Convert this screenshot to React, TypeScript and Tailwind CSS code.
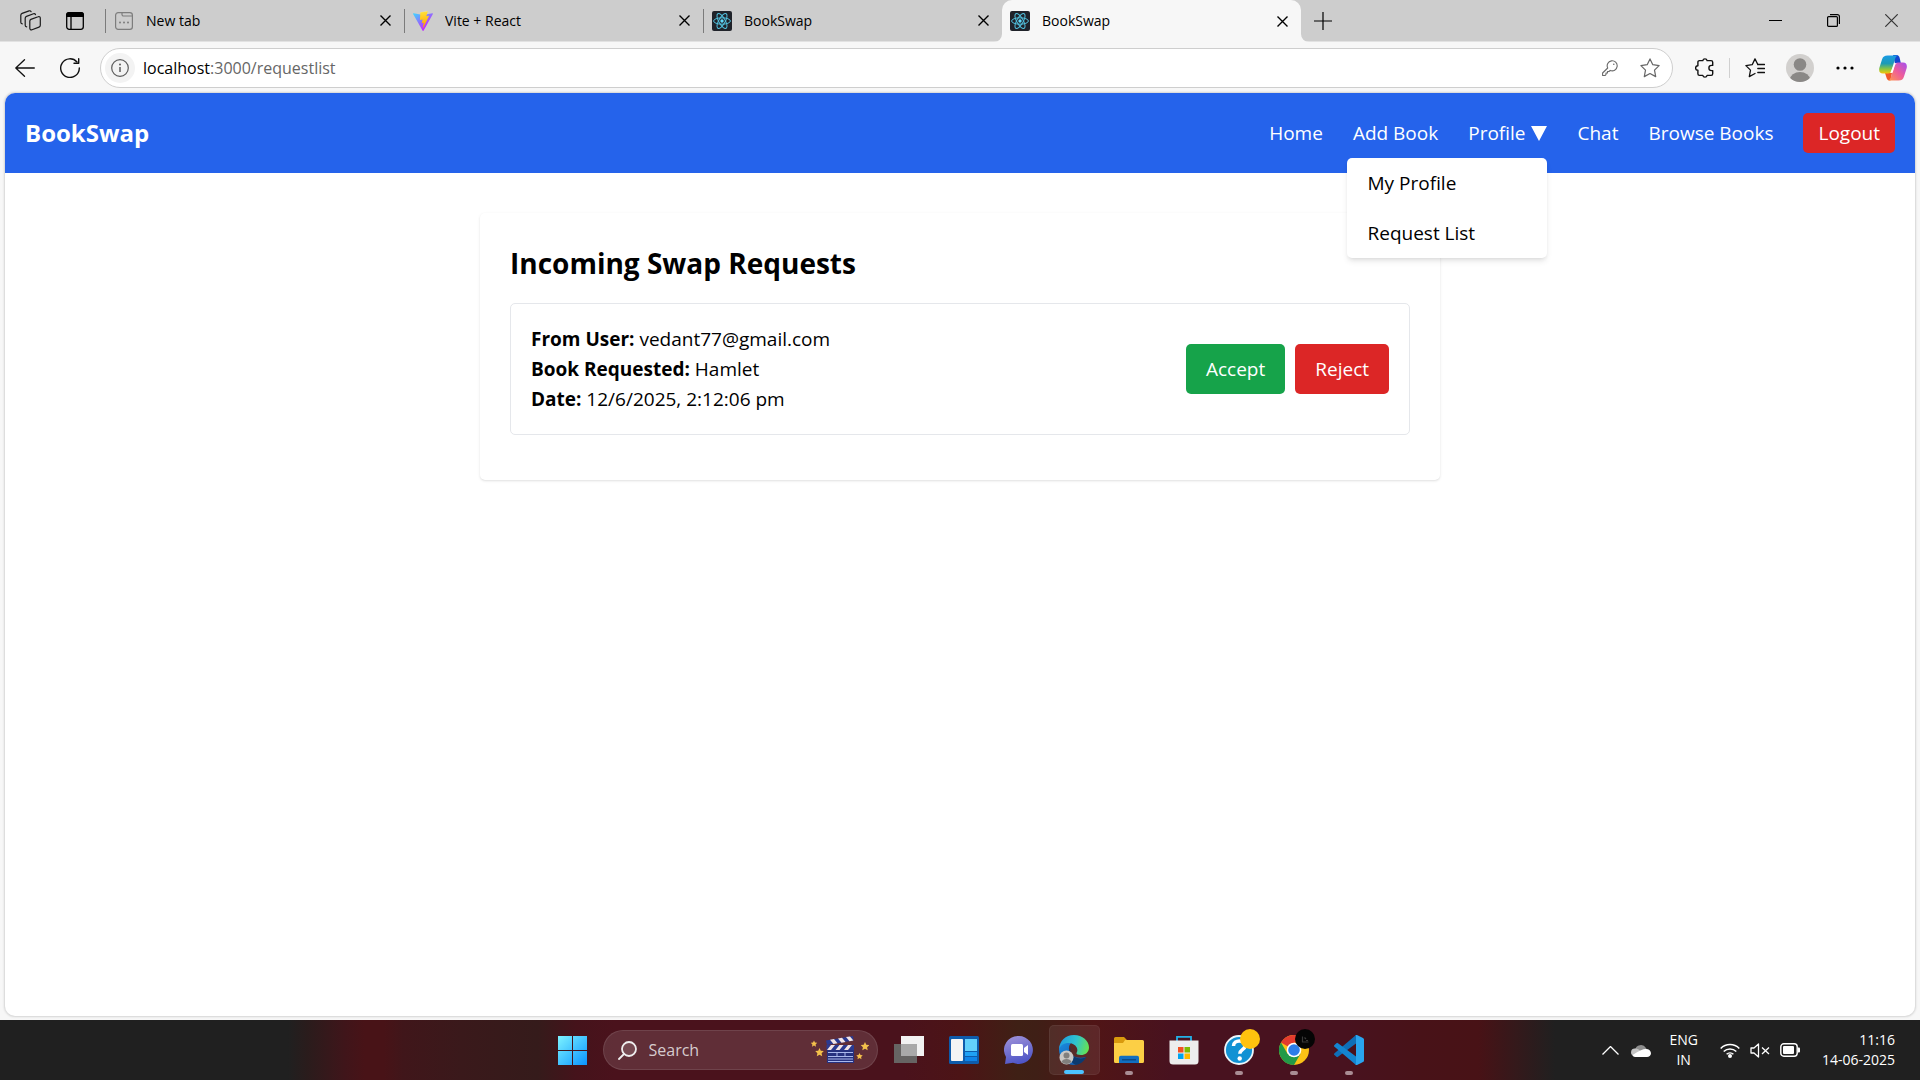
import React, { ReactNode } from "react";

type IconProps = { className?: string };

const ReactLogo = () => (
  <svg viewBox="0 0 20 20" className="size-5 shrink-0" aria-hidden="true">
    <rect width="20" height="20" rx="2" fill="#20232a" />
    <g fill="none" stroke="#52c1de" strokeWidth="1">
      <ellipse cx="10" cy="10" rx="8.4" ry="3.2" />
      <ellipse cx="10" cy="10" rx="8.4" ry="3.2" transform="rotate(60 10 10)" />
      <ellipse cx="10" cy="10" rx="8.4" ry="3.2" transform="rotate(120 10 10)" />
    </g>
    <circle cx="10" cy="10" r="1.7" fill="#61dafb" />
  </svg>
);

const ViteLogo = () => (
  <svg viewBox="0 0 256 257" className="size-5 shrink-0" aria-hidden="true">
    <defs>
      <linearGradient id="viteA" x1="-.8%" x2="57.6%" y1="7.7%" y2="78.4%">
        <stop offset="0" stopColor="#41d1ff" />
        <stop offset="1" stopColor="#bd34fe" />
      </linearGradient>
      <linearGradient id="viteB" x1="43.4%" x2="50.3%" y1="2.2%" y2="89%">
        <stop offset="0" stopColor="#ffea83" />
        <stop offset=".08" stopColor="#ffdd35" />
        <stop offset="1" stopColor="#ffa800" />
      </linearGradient>
    </defs>
    <path fill="url(#viteA)" d="M255.153 37.938L134.897 252.976c-2.483 4.44-8.862 4.466-11.382.048L.875 37.958c-2.746-4.814 1.371-10.646 6.827-9.67l120.385 21.517a6.537 6.537 0 0 0 2.322-.004l117.867-21.483c5.438-.991 9.574 4.796 6.877 9.62Z" />
    <path fill="url(#viteB)" d="M185.432.063L96.44 17.501a3.268 3.268 0 0 0-2.634 3.014l-5.474 92.456a3.268 3.268 0 0 0 3.997 3.378l24.777-5.718c2.318-.535 4.413 1.507 3.936 3.838l-7.361 36.047c-.495 2.426 1.782 4.5 4.151 3.78l15.304-4.649c2.372-.72 4.652 1.36 4.15 3.788l-11.698 56.621c-.732 3.542 3.979 5.473 5.943 2.437l1.313-2.028l72.516-144.72c1.215-2.423-.88-5.186-3.54-4.672l-25.505 4.922c-2.396.462-4.435-1.77-3.759-4.114l16.646-57.705c.677-2.35-1.37-4.583-3.769-4.113Z" />
  </svg>
);

const NewTabIcon = () => (
  <svg viewBox="0 0 18 18" className="mx-px size-[18px] shrink-0" fill="none" stroke="#7d7d7d" strokeWidth="1.2" aria-hidden="true">
    <rect x=".6" y=".6" width="16.8" height="16.8" rx="2.6" />
    <path d="M7 .6v1.9A1.5 1.5 0 0 0 8.500 4H17.400" />
    <g fill="#7d7d7d" stroke="none">
      <circle cx="5" cy="10.500" r="1" />
      <circle cx="9" cy="10.500" r="1" />
      <circle cx="13" cy="10.500" r="1" />
    </g>
  </svg>
);

const Cross = ({ className = "size-[11px]" }: IconProps) => (
  <svg viewBox="0 0 11 11" className={className} stroke="currentColor" strokeWidth="1.4" aria-hidden="true">
    <path d="M.5.5l10 10M10.500.5l-10 10" />
  </svg>
);

const Workspaces = () => (
  <svg viewBox="0 0 21 21" className="size-[21px]" fill="none" stroke="#1b1b1b" strokeWidth="1.2" strokeLinejoin="round" strokeLinecap="round" aria-hidden="true">
    <path d="M10.900 9.400l7.200-2.700a1.600 1.600 0 0 1 2.200 1.500v7a2 2 0 0 1-1.300 1.900l-7 2.700a1.600 1.600 0 0 1-2.200-1.500v-7a2 2 0 0 1 1.100-1.900z" />
    <path d="M6.700 16.800A1.600 1.600 0 0 1 5.200 15.200V8.300A2 2 0 0 1 6.500 6.400l7-2.600a1.600 1.600 0 0 1 2 .8" />
    <path d="M2.300 13.800A1.600 1.600 0 0 1 .8 12.200V5.300A2 2 0 0 1 2.100 3.400l7-2.500a1.600 1.600 0 0 1 2 .8" />
  </svg>
);

const TabActions = () => (
  <svg viewBox="0 0 18 18" className="size-[18px]" aria-hidden="true">
    <rect x=".7" y=".7" width="16.600" height="16.600" rx="2.500" fill="none" stroke="#000" strokeWidth="1.300" />
    <path d="M0 5V3a3 3 0 0 1 3-3h12a3 3 0 0 1 3 3v2z" />
    <path d="M5 5v12.500" stroke="#000" strokeWidth="1.300" />
  </svg>
);

const tabs = [
  { title: "New tab", icon: <NewTabIcon /> },
  { title: "Vite + React", icon: <ViteLogo /> },
  { title: "BookSwap", icon: <ReactLogo /> },
];

function TabStrip() {
  return (
    <div className="flex h-[42px] border-b border-[#e2e2e2] bg-[#cdcdcd] text-black">
      <div className="flex w-[105px] shrink-0 items-center gap-[25px] pl-5">
        <button aria-label="Workspaces"><Workspaces /></button>
        <button aria-label="Tab actions"><TabActions /></button>
      </div>
      {tabs.map((t) => (
        <div key={t.title} className="flex w-[299px] min-w-0 items-center">
          <span className="h-6 w-px bg-[#7b7b7b]" />
          <div className="flex min-w-0 flex-1 items-center pr-[13px] pl-2">
            {t.icon}
            <span className="ml-3 flex-1 truncate text-sm">{t.title}</span>
            <button aria-label={`Close ${t.title}`}><Cross /></button>
          </div>
        </div>
      ))}
      <div className="relative flex h-[42px] w-[299px] min-w-0 items-center rounded-t-[10px] bg-[#f7f7f7] pr-[13px] pl-2">
        <svg viewBox="0 0 8 8" className="absolute bottom-0 -left-2 size-2" aria-hidden="true"><path d="M8 0v8H0a8 8 0 0 0 8-8z" fill="#f7f7f7" /></svg>
        <svg viewBox="0 0 8 8" className="absolute -right-2 bottom-0 size-2" aria-hidden="true"><path d="M0 0v8h8A8 8 0 0 1 0 0z" fill="#f7f7f7" /></svg>
        <ReactLogo />
        <span className="ml-3 flex-1 truncate text-sm">BookSwap</span>
        <button aria-label="Close BookSwap"><Cross /></button>
      </div>
      <button aria-label="New tab" className="ml-[13px] self-center">
        <svg viewBox="0 0 18 18" className="size-[18px]" stroke="#000" strokeWidth="1.200" aria-hidden="true"><path d="M9 0v18M0 9h18" /></svg>
      </button>
      <div className="ml-auto flex items-center gap-[45px] pr-[22px]">
        <button aria-label="Minimize">
          <svg viewBox="0 0 13 13" className="size-[13px]" aria-hidden="true"><path d="M0 6h13v1H0z" /></svg>
        </button>
        <button aria-label="Restore">
          <svg viewBox="0 0 13 13" className="size-[13px]" fill="none" stroke="#000" strokeWidth="1.200" aria-hidden="true">
            <rect x=".6" y="2.600" width="9.800" height="9.800" rx="1" />
            <path d="M3 .6h7.400a2 2 0 0 1 2 2V10" />
          </svg>
        </button>
        <button aria-label="Close window" className="text-[#333]">
          <svg viewBox="0 0 13 13" className="size-[13px]" stroke="currentColor" strokeWidth="1.200" aria-hidden="true"><path d="M.3.3l12.400 12.400M12.700.3L.3 12.700" /></svg>
        </button>
      </div>
    </div>
  );
}

function Toolbar() {
  return (
    <div className="flex h-[51px] items-center bg-[#f7f7f7] pr-[13px] pl-[15px]">
      <button aria-label="Back">
        <svg viewBox="0 0 20 18" className="h-[18px] w-5" fill="none" stroke="#111" strokeWidth="1.300" strokeLinecap="round" strokeLinejoin="round" aria-hidden="true"><path d="M9.500.8L.8 9l8.700 8.200M.8 9h18.500" /></svg>
      </button>
      <button aria-label="Refresh" className="mr-5 ml-[25px]">
        <svg viewBox="0 0 20 20" className="size-5" fill="none" stroke="#111" strokeWidth="1.400" strokeLinecap="round" strokeLinejoin="round" aria-hidden="true">
          <path d="M19.300 10A9.300 9.300 0 1 1 17 4" />
          <path d="M18.700.7V5.300H14" />
        </svg>
      </button>
      <div className="flex h-10 flex-1 items-center rounded-full border border-[#cecece] bg-white pr-3 pl-1">
        <button aria-label="Site information" className="flex size-[30px] items-center justify-center rounded-full bg-[#f3f3f3]">
          <svg viewBox="0 0 18 18" className="size-[18px]" fill="none" stroke="#5c5c5c" strokeWidth="1.200" aria-hidden="true">
            <circle cx="9" cy="9" r="8.300" />
            <path d="M9 8v5" strokeWidth="1.500" />
            <circle cx="9" cy="5.500" r="1" fill="#5c5c5c" stroke="none" />
          </svg>
        </button>
        <div className="ml-2 flex-1 text-base">
          localhost<span className="text-[#666]">:3000/requestlist</span>
        </div>
        <button aria-label="Passwords">
          <svg viewBox="0 0 16 16" className="size-4" fill="none" stroke="#6a6a6a" strokeWidth="1.100" strokeLinejoin="round" aria-hidden="true">
            <path d="M5.700 8A5 5 0 1 1 8.200 10.400L7 11.500H5.500V13H4v1.600L3 15.500H.6V13z" />
            <circle cx="11.800" cy="4.200" r=".8" fill="#6a6a6a" stroke="none" />
          </svg>
        </button>
        <button aria-label="Add to favorites" className="ml-[22px]">
          <svg viewBox="0 0 20 20" className="size-5" fill="none" stroke="#666" strokeWidth="1.200" strokeLinejoin="round" aria-hidden="true">
            <path d="M10 .9l2.800 5.800 6.300.9-4.600 4.500 1.200 6.500L10 15.500l-5.700 3.100 1.200-6.500L.9 7.600l6.300-.9z" />
          </svg>
        </button>
      </div>
      <button aria-label="Extensions" className="ml-[22px]">
        <svg viewBox="0 0 20 20" className="size-5" fill="none" stroke="#111" strokeWidth="1.400" strokeLinejoin="round" aria-hidden="true">
          <path d="M4.500 2.600h3.300a2.200 2.200 0 0 1 4.300 0h4a1.600 1.600 0 0 1 1.600 1.600V7.400h-1.200a2.600 2.600 0 0 0 0 5.200h1.200v3.200a1.600 1.600 0 0 1-1.600 1.600h-4a2.200 2.200 0 0 1-4.300 0H4.500a1.600 1.600 0 0 1-1.600-1.600v-3.500a2.300 2.300 0 0 1 0-4.600V4.200a1.600 1.600 0 0 1 1.600-1.600z" />
        </svg>
      </button>
      <span className="ml-[14px] h-5 w-px bg-[#d0d0d0]" />
      <button aria-label="Favorites" className="ml-[15px]">
        <svg viewBox="0 0 20 20" className="size-5" fill="none" stroke="#111" strokeWidth="1.300" strokeLinejoin="round" strokeLinecap="round" aria-hidden="true">
          <path d="M12.800 6.500L10 .9 7.200 6.700.9 7.600l4.600 4.500-1.200 6.500L10 15.500" />
          <path d="M12.800 6.500h6.700M12.800 10.500h6.700M12.800 14.500h6.700" />
        </svg>
      </button>
      <button aria-label="Profile" className="ml-[21px]">
        <svg viewBox="0 0 28 28" className="size-7" aria-hidden="true">
          <clipPath id="avatar"><circle cx="14" cy="14" r="14" /></clipPath>
          <g clipPath="url(#avatar)">
            <path fill="#d2d0ce" d="M0 0h28v28H0z" />
            <circle cx="14" cy="10.500" r="6.300" fill="#8a8886" />
            <ellipse cx="14" cy="25.500" rx="10" ry="7.500" fill="#8a8886" />
          </g>
        </svg>
      </button>
      <button aria-label="Settings and more" className="ml-[22px]">
        <svg viewBox="0 0 18 4" className="h-1 w-[18px]" aria-hidden="true"><circle cx="2" cy="2" r="1.600" /><circle cx="9" cy="2" r="1.600" /><circle cx="16" cy="2" r="1.600" /></svg>
      </button>
      <button aria-label="Copilot" className="ml-[25px]">
        <svg viewBox="0 0 28 26" className="h-[26px] w-7" aria-hidden="true">
          <defs>
            <linearGradient id="copA" x1="0" y1="0" x2="0" y2="1"><stop offset="0" stopColor="#1a9be6" /><stop offset=".45" stopColor="#1d9bb4" /><stop offset=".75" stopColor="#8cc63f" /><stop offset="1" stopColor="#f5c60a" /></linearGradient>
            <linearGradient id="copB" x1="1" y1="0" x2="0" y2="1"><stop offset="0" stopColor="#a34ff0" /><stop offset=".5" stopColor="#ee5c9a" /><stop offset="1" stopColor="#ff9a4d" /></linearGradient>
          </defs>
          <path fill="#1446cf" d="M14 0h3.500c2 0 2.800 1.500 3.300 3.500L21.800 8h-6z" />
          <path fill="#f0592a" d="M6 18h7l-1.500 7.500h-1c-2 0-2.600-1.500-3.200-3.500z" />
          <path fill="url(#copA)" d="M8.500.5H19c-1.800.6-2.500 2-3.100 4L12.300 16c-.5 1.700-1.300 2.500-3.300 2.500H4C.8 18.500-.3 16.500.3 13L3 4.500C4 1.500 5.500.5 8.500.5z" />
          <path fill="url(#copB)" d="M19.500 25.500H9c1.800-.6 2.500-2 3.100-4L15.700 10c.5-1.700 1.300-2.500 3.300-2.500h5c3.200 0 4.300 2 3.700 5.500L25 21.500c-1 3-2.500 4-5.500 4z" />
          <path fill="#fff" d="M15.500 8.500h2.800c-1.500.3-2.200 1-2.600 2.500l-2 6.500h-2.300z" />
        </svg>
      </button>
    </div>
  );
}

function NavBar() {
  return (
    <nav className="flex h-20 items-center justify-between bg-[#2563eb] px-5 text-white">
      <h1 className="text-2xl font-bold">BookSwap</h1>
      <div className="flex items-center gap-[30px] text-[19px]">
        <a href="#home">Home</a>
        <a href="#add">Add Book</a>
        <div className="relative">
          <button aria-haspopup="menu" aria-expanded="true" className="flex items-center gap-1.5">
            Profile
            <svg viewBox="0 0 16 15" className="h-[15px] w-4" fill="#fff" aria-hidden="true"><path d="M0 0h16L8 15z" /></svg>
          </button>
          <div className="absolute top-full right-0 z-10 mt-[11px] w-[200px] rounded-[5px] bg-white text-black shadow-md">
            <a href="#profile" className="block px-5 py-2.5 leading-[30px]">My Profile</a>
            <a href="#requests" className="block px-5 py-2.5 leading-[30px]">Request List</a>
          </div>
        </div>
        <a href="#chat">Chat</a>
        <a href="#browse">Browse Books</a>
        <button className="h-10 rounded-[5px] bg-[#dc2626] px-[15px]">Logout</button>
      </div>
    </nav>
  );
}

function Requests() {
  return (
    <main className="mx-auto mt-10 max-w-[960px] rounded-[5px] bg-white p-[30px] shadow">
      <h2 className="mb-5 text-[28px] leading-10 font-bold">Incoming Swap Requests</h2>
      <ul>
        <li className="mb-[15px] flex items-center justify-between rounded-[5px] border border-gray-200 p-5 text-[19px] leading-[30px]">
          <div>
            <p><strong>From User:</strong> vedant77@gmail.com</p>
            <p><strong>Book Requested:</strong> Hamlet</p>
            <p><strong>Date:</strong> 12/6/2025, 2:12:06 pm</p>
          </div>
          <div className="flex gap-2.5 text-white">
            <button className="rounded-[5px] bg-[#16a34a] px-5 py-2.5">Accept</button>
            <button className="rounded-[5px] bg-[#dc2626] px-5 py-2.5">Reject</button>
          </div>
        </li>
      </ul>
    </main>
  );
}

const WindowsLogo = () => (
  <svg viewBox="0 0 29 29" className="size-[29px]" aria-hidden="true">
    <defs><linearGradient id="win" x1="0" y1="0" x2="1" y2="1"><stop offset="0" stopColor="#7df3ff" /><stop offset="1" stopColor="#0a94ff" /></linearGradient></defs>
    <path fill="url(#win)" d="M0 0h14v14H0zM15 0h14v14H15zM0 15h14v14H0zM15 15h14v14H15z" />
  </svg>
);

const Clapper = () => (
  <svg viewBox="0 0 58 28" className="h-7 w-[58px]" aria-hidden="true">
    <path fill="#26317f" d="M16 14h27v13H16z" />
    <path fill="#2b3a90" d="M15 4.500L42 0l.7 4.500L16 9z" />
    <path fill="#f2e4e4" d="M19 3.800l4-.7 3.500 4.200-4 .7zM27 2.500l4-.7L34.500 6l-4 .7zM35 1.100l4-.6 3.400 4-3.900.7z" />
    <path fill="#2b3a90" d="M15.500 9H43v5H15.500z" />
    <path fill="#f2e4e4" d="M20 9h4l-4 5h-4zM28.500 9h4l-4 5h-4zM37 9h4l-4 5h-4z" />
    <path stroke="#aab8ec" strokeWidth="1" d="M17 16.500h25M17 20.500h25M17 23h25M17 25.500h25M26 16.500v4M34 16.500v4" />
    <g fill="#f3c04b">
      <path d="M3 4.500l1 2 2.200.3-1.600 1.600.4 2.300-2-1.100-2 1.100.4-2.300L-.2 6.800l2.200-.3z" />
      <path d="M8.500 12l1.300 2.700 3 .4-2.200 2.100.6 3-2.700-1.500-2.700 1.500.6-3-2.200-2.100 3-.4z" />
      <path d="M54 6l1.300 2.700 3 .4-2.200 2.100.6 3L54 12.700l-2.700 1.500.6-3-2.200-2.100 3-.4z" />
      <path d="M48.500 17l1 2 2.200.3-1.600 1.600.4 2.300-2-1.100-2 1.100.4-2.300-1.600-1.600 2.200-.3z" />
    </g>
  </svg>
);

const TaskView = () => (
  <svg viewBox="0 0 30 30" className="size-[30px]" aria-hidden="true">
    <path fill="#666463" d="M0 9h23v19H0z" />
    <path fill="#f2f2f2" d="M7 1h23v20H7z" />
    <path fill="#a9a9a9" d="M7 9h16v12H7z" />
  </svg>
);

const Widgets = () => (
  <svg viewBox="0 0 30 30" className="size-[30px]" aria-hidden="true">
    <rect y="1" width="30" height="28" rx="1.500" fill="#0e5bab" />
    <rect x="2" y="4" width="12" height="22" rx="1" fill="#f4f4f4" />
    <path fill="#63d0fb" d="M16 4h12v12H16z" />
    <path fill="#1fa1f5" d="M16 17h12v4H16z" />
    <path fill="#0f84e8" d="M16 22h12v4H16z" />
  </svg>
);

const ChatIcon = () => (
  <svg viewBox="0 0 30 30" className="size-[30px]" aria-hidden="true">
    <defs><linearGradient id="chat" x1=".3" y1="0" x2=".6" y2="1"><stop offset="0" stopColor="#9b8fd8" /><stop offset="1" stopColor="#4b53c6" /></linearGradient></defs>
    <path fill="url(#chat)" d="M15 1a14 14 0 1 1-6 26.700L1 29l1-7A14 14 0 0 1 15 1z" />
    <rect x="7" y="9" width="12" height="12" rx="1.500" fill="#fff" />
    <path fill="#fff" d="M20 13l4-3v10l-4-3z" />
  </svg>
);

const EdgeIcon = () => (
  <svg viewBox="0 0 30 30" className="size-[30px]" aria-hidden="true">
    <defs>
      <linearGradient id="edgeA" x1="0" y1=".3" x2="1" y2=".5"><stop offset="0" stopColor="#1e9be0" /><stop offset=".55" stopColor="#2fc4cf" /><stop offset="1" stopColor="#65e254" /></linearGradient>
      <linearGradient id="edgeB" x1="0" y1="0" x2="1" y2="1"><stop offset="0" stopColor="#1b8ce0" /><stop offset="1" stopColor="#0f4fa3" /></linearGradient>
    </defs>
    <path fill="url(#edgeB)" d="M0 14C1 8 6 6 12 8c-3 3-2.500 8 0 11s8 5 15 3c-3 5-8 8-13 8C6 29.500 0 23 0 14z" />
    <path fill="#0b3a70" d="M12 12c-2.500 5 1 9.500 6.500 11 3.500 1 6.500.3 9-1.200-3 5-6 7.500-10.500 8.200C9 27 8 17 12 12z" />
    <path fill="url(#edgeA)" d="M0 14C.5 6 6.500 0 15 0s15 6 15 12.500c0 5-4 7.500-8 7.500-3 0-5-1-4.500-2 1-1.500 1.200-3.500.2-5.500C16 9 12 7.500 8 8c-4 .6-7 3-8 6z" />
    <circle cx="7.500" cy="22.500" r="7" fill="#c9c7c5" />
    <circle cx="7.500" cy="20.500" r="3" fill="#817f7d" />
    <path fill="#817f7d" d="M2.500 27c1-4 9-4 10 0a7 7 0 0 1-10 0z" />
  </svg>
);

const Explorer = () => (
  <svg viewBox="0 0 30 30" className="size-[30px]" aria-hidden="true">
    <path fill="#d99a0d" d="M0 3.500A1.500 1.500 0 0 1 1.500 2H10l3 3v5H0z" />
    <path fill="#fccf45" d="M11 5h17.500A1.500 1.500 0 0 1 30 6.500v20a1.500 1.500 0 0 1-1.500 1.500h-27A1.500 1.500 0 0 1 0 26.500V8h9z" />
    <path fill="#126fc0" d="M5 28v-5.500A1.800 1.800 0 0 1 6.800 20.700h16.400a1.800 1.800 0 0 1 1.800 1.800V28z" />
    <path fill="#0b4a87" d="M8 24h14v1.500H8z" />
  </svg>
);

const Store = () => (
  <svg viewBox="0 0 30 30" className="size-[30px]" aria-hidden="true">
    <path fill="none" stroke="#23b1e8" strokeWidth="1.800" d="M8 7V1.800h14V7" />
    <path fill="#ededed" d="M.5 5.500h29V26a3.500 3.500 0 0 1-3.500 3.500H4A3.500 3.500 0 0 1 .5 26z" />
    <path fill="#f25022" d="M9 12h5.500v5.500H9z" />
    <path fill="#7fba00" d="M15.500 12H21v5.500h-5.500z" />
    <path fill="#00a4ef" d="M9 18.500h5.500V24H9z" />
    <path fill="#ffb900" d="M15.500 18.500H21V24h-5.500z" />
  </svg>
);

const Help = () => (
  <svg viewBox="0 0 36 36" className="size-9" aria-hidden="true">
    <circle cx="15" cy="21" r="14" fill="#1192d4" stroke="#eef6fa" strokeWidth="1.800" />
    <path d="M9.500 17c0-7 11.500-6.500 11.500-.3 0 4-5.200 4-5.200 8" fill="none" stroke="#fff" strokeWidth="3.500" />
    <circle cx="15.700" cy="29.500" r="2.200" fill="#fff" />
    <circle cx="26" cy="10" r="10" fill="#ffc20e" />
  </svg>
);

const Chrome = () => (
  <svg viewBox="0 0 36 36" className="size-9" aria-hidden="true">
    <circle cx="15" cy="21" r="15" fill="#fbc116" />
    <path fill="#e33b2e" d="M15 21L2 13.500A15 15 0 0 1 28 13.500H15z" />
    <path fill="#229a48" d="M2 13.500A15 15 0 0 0 15 36l6.500-11.300L8.500 24.700z" />
    <circle cx="15" cy="21" r="7.300" fill="#fff" />
    <circle cx="15" cy="21" r="5.800" fill="#2b7de9" />
    <circle cx="26" cy="10" r="10" fill="#050505" />
    <path d="M23.500 7.500v5.500h6M25.500 8.500l1.500 1.500M27 11.500h2" fill="none" stroke="#3a3a3a" strokeWidth="1.200" />
  </svg>
);

const VSCode = () => (
  <svg viewBox="0 0 30 30" className="size-[30px]" aria-hidden="true">
    <path fill="#0f6fb8" d="M22 0v8.500L4 21.800a1.200 1.200 0 0 1-1.600 0L.5 20a1.200 1.200 0 0 1 0-1.800z" />
    <path fill="#1485d1" d="M22 30v-8.500L4 8.200a1.200 1.200 0 0 0-1.600 0L.5 10a1.200 1.200 0 0 0 0 1.800z" />
    <path fill="#29a4ee" d="M21.500.3c.6-.4 1.300-.3 2 0l5.500 2.600c.7.400 1 .9 1 1.600v21c0 .7-.3 1.200-1 1.600l-5.500 2.600c-.7.300-1.400.4-2 0 .4-.2.500-.6.500-1.200V1.500c0-.6-.1-1-.5-1.200z" />
  </svg>
);

type TaskbarApp = { name: string; icon: ReactNode; state?: "open" | "active"; badge?: boolean };

const apps: TaskbarApp[] = [
  { name: "Task view", icon: <TaskView /> },
  { name: "Widgets", icon: <Widgets /> },
  { name: "Chat", icon: <ChatIcon /> },
  { name: "Edge", icon: <EdgeIcon />, state: "active" },
  { name: "File Explorer", icon: <Explorer />, state: "open" },
  { name: "Store", icon: <Store /> },
  { name: "Get Help", icon: <Help />, state: "open", badge: true },
  { name: "Chrome", icon: <Chrome />, state: "open", badge: true },
  { name: "VS Code", icon: <VSCode />, state: "open" },
];

function Taskbar() {
  return (
    <footer className="grid h-[60px] grid-cols-[1fr_auto_1fr] items-center bg-[linear-gradient(90deg,#202020_0%,#202020_15%,#2a1c1c_16%,#40151a_18%,#481317_19%,#481317_20%,#40161a_21%,#3a191b_24%,#351b1b_28%,#45131b_30%,#4a121c_32%,#4a121c_47%,#4c1416_50%,#3f2015_53%,#3f1f16_54%,#501516_57%,#48121f_61%,#48121f_70%,#481218_74%,#481216_77%,#202020_81%,#202020_100%)] text-white">
      <div />
      <div className="flex items-center pl-3.5">
        <button aria-label="Start" className="mr-4"><WindowsLogo /></button>
        <label className="mr-1 flex h-10 w-[275px] items-center rounded-full border border-white/10 bg-white/12 pr-2 pl-3.5">
          <svg viewBox="0 0 19 19" className="size-[19px] shrink-0" fill="none" stroke="#eee" strokeWidth="1.800" strokeLinecap="round" aria-hidden="true">
            <circle cx="11" cy="8" r="7" fill="#ffffff22" />
            <path d="M6 13l-5 5" />
          </svg>
          <input aria-label="Search" placeholder="Search" className="ml-3 w-0 min-w-0 flex-1 bg-transparent text-base outline-none placeholder:text-[#d6cbce]" />
          <Clapper />
        </label>
        {apps.map((a) => (
          <button
            key={a.name}
            aria-label={a.name}
            className={
              a.state === "active"
                ? "relative mx-[2px] flex h-[50px] w-[51px] items-center justify-center rounded-[5px] border border-white/5 bg-white/8"
                : "relative mx-[2px] flex h-[50px] w-[51px] items-center justify-center"
            }
          >
            <span className={a.badge ? "pb-1.5 pl-1.5" : ""}>{a.icon}</span>
            {a.state === "active" && <span className="absolute bottom-0 h-1 w-5 rounded-full bg-[#4cc2ff]" />}
            {a.state === "open" && <span className="absolute bottom-0 h-1 w-2 rounded-full bg-[#a98d94]" />}
          </button>
        ))}
      </div>
      <div className="flex items-center justify-end pr-[25px] text-sm leading-5">
        <button aria-label="Show hidden icons">
          <svg viewBox="0 0 17 9" className="h-[9px] w-[17px]" fill="none" stroke="#fff" strokeWidth="1.300" aria-hidden="true"><path d="M.5 8.500l8-8 8 8" /></svg>
        </button>
        <svg viewBox="0 0 20 13" className="ml-3 h-[13px] w-5" aria-hidden="true">
          <path fill="#8f8f8f" d="M4 6a6 6 0 0 1 11-2l3 5H3z" />
          <path fill="#c4c4c4" d="M4 4.500c2 0 3 .5 5 2L3 12A3.800 3.800 0 0 1 4 4.500z" />
          <path fill="#fff" d="M1.500 11c2-1 8-5.500 13-6 3.500-.2 5.500 2 5.500 4.200S18 13 16 13H4c-1.200 0-2.200-.8-2.500-2z" />
        </svg>
        <div className="ml-[18px] text-center"><div>ENG</div><div>IN</div></div>
        <svg viewBox="0 0 20 15" className="ml-[22px] h-[15px] w-5" fill="none" stroke="#fff" strokeWidth="1.500" aria-hidden="true">
          <path d="M.7 5.500a13 13 0 0 1 18.600 0M3.700 8.500a9 9 0 0 1 12.600 0M6.600 11.300a5 5 0 0 1 6.800 0" />
          <circle cx="10" cy="13" r="2" fill="#fff" stroke="none" />
        </svg>
        <svg viewBox="0 0 20 15" className="ml-[10px] h-[15px] w-5" fill="none" stroke="#fff" strokeWidth="1.300" strokeLinejoin="round" aria-hidden="true">
          <path d="M1 5h3l4.500-4v13L4 10H1z" />
          <path d="M12 4.500l7 6.500M19 4.500L12 11" />
        </svg>
        <svg viewBox="0 0 20 14" className="ml-[10px] h-3.5 w-5" aria-hidden="true">
          <rect x=".8" y=".8" width="16.400" height="12.400" rx="3" fill="none" stroke="#fff" strokeWidth="1.400" />
          <rect x="3" y="3" width="11" height="8" rx="1" fill="#fff" />
          <path fill="#fff" d="M18 4.500h1a1 1 0 0 1 1 1v3a1 1 0 0 1-1 1h-1z" />
        </svg>
        <div className="ml-[22px] text-right"><div>11:16</div><div>14-06-2025</div></div>
      </div>
    </footer>
  );
}

export default function App() {
  return (
    <div className="flex min-h-screen flex-col bg-[#f7f7f7] font-['Open_Sans','Noto_Sans',sans-serif] text-black">
      <TabStrip />
      <Toolbar />
      <div className="mx-[5px] mb-1 flex-1 overflow-hidden rounded-[10px] bg-white shadow-[0_0_2px_1px_#d4d4d4]">
        <NavBar />
        <Requests />
      </div>
      <Taskbar />
    </div>
  );
}
